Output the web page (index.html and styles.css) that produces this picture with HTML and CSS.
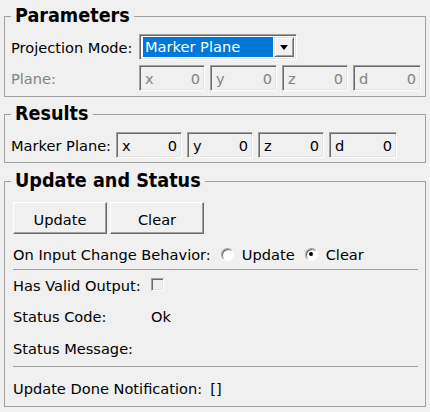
FILE: index.html
```html
<!DOCTYPE html>
<html>
<head>
<meta charset="utf-8">
<link rel="stylesheet" href="styles.css">
</head>
<body>
<div class="window">
  <fieldset class="group group-params">
    <legend>Parameters</legend>
    <div class="form-grid params-grid">
      <span class="lbl">Projection Mode:</span>
      <div class="combo">
        <span class="combo-value">Marker Plane</span>
        <span class="combo-btn"><span class="arrow"></span></span>
      </div>
      <span class="lbl disabled">Plane:</span>
      <div class="spin-grid params-spins">
        <div class="spin disabled"><span>x</span><span>0</span></div>
        <div class="spin disabled"><span>y</span><span>0</span></div>
        <div class="spin disabled"><span>z</span><span>0</span></div>
        <div class="spin disabled"><span>d</span><span>0</span></div>
      </div>
    </div>
  </fieldset>

  <fieldset class="group group-results">
    <legend>Results</legend>
    <div class="form-grid results-grid">
      <span class="lbl">Marker Plane:</span>
      <div class="spin-grid results-spins">
        <div class="spin"><span>x</span><span>0</span></div>
        <div class="spin"><span>y</span><span>0</span></div>
        <div class="spin"><span>z</span><span>0</span></div>
        <div class="spin"><span>d</span><span>0</span></div>
      </div>
    </div>
  </fieldset>

  <fieldset class="group group-status">
    <legend>Update and Status</legend>
    <div class="status-body">
      <div class="btn-row">
        <button class="btn">Update</button>
        <button class="btn">Clear</button>
      </div>
      <div class="row radio-row">
        <span class="lbl">On Input Change Behavior:</span>
        <div class="radios">
          <span class="radio-opt"><span class="radio"></span>Update</span>
          <span class="radio-opt"><span class="radio checked"></span>Clear</span>
        </div>
      </div>
      <div class="sep sep-1"></div>
      <div class="row kv row-valid"><span class="lbl">Has Valid Output:</span><span class="check"></span></div>
      <div class="row kv row-code"><span class="lbl">Status Code:</span><span>Ok</span></div>
      <div class="row kv row-msg"><span class="lbl">Status Message:</span><span></span></div>
      <div class="sep sep-2"></div>
      <div class="row row-notify"><span class="lbl">Update Done Notification:</span><span>[]</span></div>
    </div>
  </fieldset>
</div>
</body>
</html>
```
FILE: styles.css
```css
html, body {
  margin: 0;
  padding: 0;
  background: #f0f0f0;
  overflow: hidden;
}
body {
  font-family: "DejaVu Sans", sans-serif;
  font-size: 14.6px;
  color: #000;
}
.window {
  padding: 4px 4px 0 4px;
  width: 430px;
  box-sizing: border-box;
}
.group {
  margin: 0;
  border: 1px solid #a0a0a0;
  padding: 6px 5px 5px 6px;
  min-width: 0;
}
.group legend {
  font-family: "DejaVu Sans Condensed", "DejaVu Sans", sans-serif;
  font-weight: bold;
  font-size: 19.6px;
  line-height: 24px;
  padding: 0 4px;
  margin-left: 0;
}
.group-results {
  margin-top: 5px;
  padding-bottom: 4px;
}
.group-status {
  margin-top: 6px;
  padding: 0 5px 0 6px;
}
.form-grid {
  display: grid;
  align-items: center;
  row-gap: 5px;
}
.params-grid {
  grid-template-columns: 128px 1fr;
  grid-auto-rows: 26px;
}
.results-grid {
  grid-template-columns: 105px 1fr;
  grid-auto-rows: 26px;
}
.lbl {
  white-space: nowrap;
}
.disabled {
  color: #838383;
}
/* combo box */
.combo {
  display: flex;
  width: 158px;
  height: 26px;
  box-sizing: border-box;
  border: 1px solid;
  border-color: #a0a0a0 #fff #fff #a0a0a0;
  box-shadow: inset 1px 1px #696969, inset -1px -1px #e3e3e3;
  background: #fff;
  padding: 2px;
}
.combo-value {
  flex: 1;
  margin: 0 1px 0 1px;
  background: #0078d7;
  color: #fff;
  line-height: 20px;
  padding-left: 2px;
  white-space: nowrap;
}
.combo-btn {
  width: 20px;
  box-sizing: border-box;
  background: #f0f0f0;
  border: 1px solid;
  border-color: #e3e3e3 #696969 #696969 #e3e3e3;
  box-shadow: inset 1px 1px #fff, inset -1px -1px #a0a0a0;
  display: flex;
  align-items: center;
  justify-content: center;
}
.arrow {
  width: 0;
  height: 0;
  border-left: 4px solid transparent;
  border-right: 4px solid transparent;
  border-top: 5px solid #000;
  margin-top: 1px;
}
/* spin boxes */
.spin-grid {
  display: grid;
  column-gap: 5px;
  height: 26px;
}
.params-spins {
  grid-template-columns: 66px 67px 66px 68px;
}
.results-spins {
  grid-template-columns: 66px 66px 66px 68px;
}
.spin {
  display: flex;
  justify-content: space-between;
  align-items: center;
  height: 26px;
  box-sizing: border-box;
  border: 1px solid;
  border-color: #a0a0a0 #fff #fff #a0a0a0;
  box-shadow: inset 1px 1px #696969, inset -1px -1px #e3e3e3;
  background: #f0f0f0;
  padding: 0 4px 0 5px;
}
/* status section */
.status-body {
  padding: 9px 2px 7px 2px;
}
.btn-row {
  display: flex;
  gap: 3px;
  height: 32px;
}
.btn {
  width: 94px;
  height: 32px;
  font: inherit;
  color: #000;
  background: #f0f0f0;
  border: 1px solid;
  border-color: #fff #696969 #696969 #fff;
  box-shadow: inset -1px -1px #a0a0a0, inset 1px 1px #f0f0f0;
  padding: 2px 0 0 0;
  margin: 0;
}
.row {
  display: flex;
  align-items: center;
  height: 22px;
  white-space: nowrap;
}
.radio-row { margin-top: 9px; }
.radios {
  display: flex;
  gap: 10px;
  margin-left: 10px;
}
.radio-opt {
  display: flex;
  align-items: center;
  gap: 8px;
}
.radio {
  width: 13px;
  height: 13px;
  box-sizing: border-box;
  border-radius: 50%;
  border: 1px solid;
  border-color: #a0a0a0 #fff #fff #a0a0a0;
  box-shadow: inset 1px 1px #696969;
  background: #fff;
  position: relative;
}
.radio.checked::after {
  content: "";
  position: absolute;
  left: 3px;
  top: 3px;
  width: 4px;
  height: 4px;
  border-radius: 50%;
  background: #000;
}
.sep {
  height: 1px;
  background: #a0a0a0;
}
.sep-1 { margin-top: 4px; }
.sep-2 { margin-top: 7px; }
.kv .lbl {
  width: 138px;
}
.row-valid { margin-top: 4px; }
.row-code { margin-top: 9px; }
.row-msg { margin-top: 10px; }
.row-notify {
  margin-top: 10px;
  gap: 8px;
}
.check {
  width: 13px;
  height: 13px;
  box-sizing: border-box;
  border: 1px solid;
  border-color: #a0a0a0 #fff #fff #a0a0a0;
  box-shadow: inset 1px 1px #696969, inset -1px -1px #e3e3e3;
  background: #f0f0f0;
  margin-top: -1px;
}
```
